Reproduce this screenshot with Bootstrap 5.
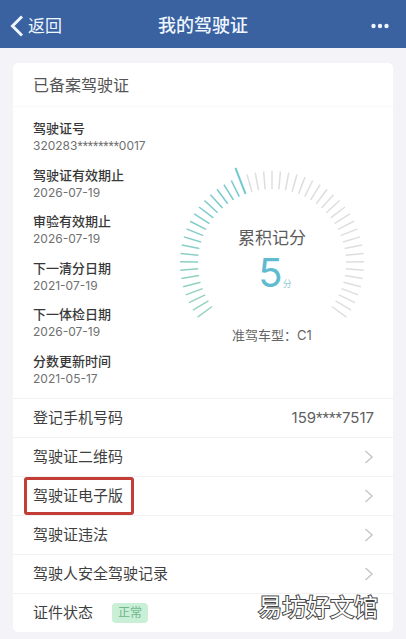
<!DOCTYPE html>
<html lang="zh-CN">
<head>
<meta charset="utf-8">
<meta name="viewport" content="width=device-width, initial-scale=1">
<title>我的驾驶证</title>
<link href="https://cdn.jsdelivr.net/npm/bootstrap@5.3.0/dist/css/bootstrap.min.css" rel="stylesheet">
<style>
  body { background: #f3f3f8; color: #3c3c3c; font-family: Inter, "Noto Sans CJK SC", sans-serif; }
  .topbar { background: #3b62a0; color: #eef6ff; height: 48px; padding: 4px 10px 0; }
  .topbar .btn { color: inherit; line-height: 24px; font-size: 17px; }
  .topbar h1 { font-size: 18px; line-height: 24px; font-weight: 500; }
  .side { flex: 1 1 0; }
  .panel { margin: 15px 13px 8px; border-radius: 5px; background: #fff; }
  .panel-title { font-size: 16px; line-height: 24px; font-weight: 400; padding: 10px 20px 9px; color: #555; border-bottom: 1px solid #f8f8f8; }
  .summary { padding: 12px 20px 11px; }
  .facts { width: 146px; min-height: 268px; }
  .facts dt { font-size: 13px; line-height: 19px; font-weight: 500; color: #383838; }
  .facts dd { font-size: 12px; line-height: 16px; margin: 0; color: #707070; }
  .stars { font-family: Roboto, sans-serif; }
  .gauge { width: 186px; margin: 48px 10px 0 0; }
  .gauge-name { font-size: 17px; line-height: 24px; color: #5c5c5c; }
  .gauge-text { position: absolute; top: 59px; left: 0; right: 0; }
  .score { font-size: 40px; line-height: 46px; font-weight: 400; color: #5fbbd0; padding-left: 6px; }
  .score small { font-size: 9px; color: #8fcbd6; }
  .klass { font-size: 13px; line-height: 20px; color: #666; margin-top: 4px; }
  .line { height: 39px; padding: 0 19px 0 20px; border-top: 1px solid #f2f2f4; font-size: 15px; line-height: 24px; color: #3f3f3f; text-decoration: none; }
  .line:hover { background: #fafafc; }
  .phone { color: #5f5f5f; }
  .marked::after { content: ""; position: absolute; inset: -7px -11px -7px -9px; border: 3px solid #c33d37; border-radius: 3px; }
  .state { background: #c9f0d7; color: #6fb78b; font-size: 12px; line-height: 20px; padding: 0 6px; border-radius: 4px; margin-left: 19px; }
  .watermark { position: absolute; right: 15px; bottom: 7px; font-size: 24px; line-height: 34px; color: #fff; -webkit-text-stroke: 2px #444; paint-order: stroke fill; }
</style>
</head>
<body>
<header class="topbar d-flex align-items-center">
  <div class="side">
    <button type="button" class="btn border-0 p-0 d-flex align-items-center">
      <svg width="14" height="22" viewBox="0 0 14 22" fill="none" stroke="currentColor" stroke-width="3" aria-hidden="true"><path d="M12 1.500L2.500 11L12 20.500"/></svg>
      <span class="ms-1">返回</span>
    </button>
  </div>
  <h1 class="m-0">我的驾驶证</h1>
  <div class="side d-flex justify-content-end">
    <button type="button" class="btn border-0 p-0 d-flex" aria-label="更多">
      <svg width="26" height="6" viewBox="0 0 26 6" fill="currentColor" aria-hidden="true"><circle cx="3.500" cy="3" r="2.200"/><circle cx="10" cy="3" r="2.200"/><circle cx="16.500" cy="3" r="2.200"/></svg>
    </button>
  </div>
</header>

<main class="panel position-relative">
  <h2 class="panel-title m-0">已备案驾驶证</h2>
  <section class="summary d-flex">
    <dl class="facts m-0 flex-shrink-0 d-flex flex-column justify-content-between">
      <div><dt>驾驶证号</dt><dd>320283<span class="stars">********</span>0017</dd></div>
      <div><dt>驾驶证有效期止</dt><dd>2026-07-19</dd></div>
      <div><dt>审验有效期止</dt><dd>2026-07-19</dd></div>
      <div><dt>下一清分日期</dt><dd>2021-07-19</dd></div>
      <div><dt>下一体检日期</dt><dd>2026-07-19</dd></div>
      <div><dt>分数更新时间</dt><dd>2021-05-17</dd></div>
    </dl>
    <div class="mx-auto flex-shrink-0">
      <div class="gauge position-relative text-center">
        <svg id="dial" class="d-block" width="186" height="154" viewBox="-93 -96 186 154" overflow="visible" aria-hidden="true"></svg>
        <div class="gauge-text">
          <div class="gauge-name">累积记分</div>
          <div class="score">5<small>分</small></div>
        </div>
        <div class="klass">准驾车型：C1</div>
      </div>
    </div>
  </section>

  <div class="line d-flex align-items-center justify-content-between"><span>登记手机号码</span><span class="phone">159<span class="stars">****</span>7517</span></div>
  <a href="#" class="line d-flex align-items-center justify-content-between"><span>驾驶证二维码</span><svg width="10" height="14"><use href="#chevron"/></svg></a>
  <a href="#" class="line d-flex align-items-center justify-content-between"><span class="marked position-relative">驾驶证电子版</span><svg width="10" height="14"><use href="#chevron"/></svg></a>
  <a href="#" class="line d-flex align-items-center justify-content-between"><span>驾驶证违法</span><svg width="10" height="14"><use href="#chevron"/></svg></a>
  <a href="#" class="line d-flex align-items-center justify-content-between"><span>驾驶人安全驾驶记录</span><svg width="10" height="14"><use href="#chevron"/></svg></a>
  <div class="line d-flex align-items-center"><span>证件状态</span><span class="state">正常</span></div>
  <div class="watermark">易坊好文馆</div>
</main>

<svg class="d-none" aria-hidden="true">
  <symbol id="chevron" viewBox="0 0 10 14"><path d="M1.500 1L8 7L1.500 13" fill="none" stroke="#c8c8ca" stroke-width="1.500"/></symbol>
</svg>
<script src="https://cdn.jsdelivr.net/npm/bootstrap@5.3.0/dist/js/bootstrap.bundle.min.js"></script>
<script>
  // 49 ticks over 252 degrees; the pointer is the long tick.
  const dial = document.getElementById('dial');
  const pointer = 20, total = 48;
  for (let i = 0; i <= total; i++) {
    const a = (216 - i * 252 / total) * Math.PI / 180;
    const outer = i === pointer ? 102 : 92, inner = 74;
    const tick = document.createElementNS('http://www.w3.org/2000/svg', 'line');
    tick.setAttribute('x1', inner * Math.cos(a));
    tick.setAttribute('y1', -inner * Math.sin(a));
    tick.setAttribute('x2', outer * Math.cos(a));
    tick.setAttribute('y2', -outer * Math.sin(a));
    const t = i / pointer;
    tick.setAttribute('stroke', i <= pointer
      ? `rgb(${152 - 38 * t}, ${212 - 12 * t}, ${190 + 18 * t})` : '#dedede');
    tick.setAttribute('stroke-width', i === pointer ? 2 : 1.5);
    dial.appendChild(tick);
  }
</script>
</body>
</html>
